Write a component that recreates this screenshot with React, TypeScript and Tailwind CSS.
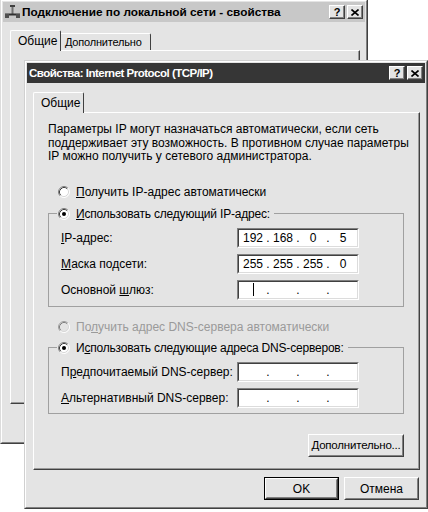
import React, { Fragment } from "react";

function Radio({ checked, disabled }: { checked?: boolean; disabled?: boolean }) {
  return (
    <svg width="12" height="12" viewBox="0 0 12 12" className="shrink-0">
      <circle cx="6" cy="6" r="5" fill={disabled ? "#e4e4e4" : "#ffffff"} />
      <path d="M2.11 9.89A5.5 5.5 0 0 1 9.89 2.11" fill="none" stroke={disabled ? "#a0a0a0" : "#808080"} />
      <path d="M9.89 2.11A5.5 5.5 0 0 1 2.11 9.89" fill="none" stroke="#ffffff" />
      <path d="M2.82 9.18A4.5 4.5 0 0 1 9.18 2.82" fill="none" stroke={disabled ? "#808080" : "#404040"} />
      <path d="M9.18 2.82A4.5 4.5 0 0 1 2.82 9.18" fill="none" stroke="#d8d8d8" />
      {checked && <circle cx="6" cy="6" r="2" fill="#000000" />}
    </svg>
  );
}

function IpBox({ vals, cursor }: { vals: string[]; cursor?: boolean }) {
  return (
    <div className="w-[122px] h-[20px] shrink-0 border border-t-[#808080] border-l-[#808080] border-r-white border-b-white">
      <div className="h-full bg-white border border-t-[#404040] border-l-[#404040] border-r-[#dcdcdc] border-b-[#dcdcdc] flex items-center pl-[1px]">
        {vals.map((v, i) => (
          <Fragment key={i}>
            <div className="w-[26px] h-full flex items-center justify-center">
              {cursor && i === 0 ? <div className="w-px h-[13px] bg-black" /> : v}
            </div>
            {i < 3 && <div className="w-[4px] flex justify-center">.</div>}
          </Fragment>
        ))}
      </div>
    </div>
  );
}

function Btn({ children, def, wide }: { children: React.ReactNode; def?: boolean; wide?: boolean }) {
  const inner = (
    <div className="h-full border border-t-white border-l-white border-r-[#404040] border-b-[#404040]">
      <div className="h-full border border-t-[#e4e4e4] border-l-[#e4e4e4] border-r-[#808080] border-b-[#808080] flex items-center justify-center whitespace-nowrap">
        {children}
      </div>
    </div>
  );
  if (def) return <div className="w-[75px] h-[23px] border border-black">{inner}</div>;
  return <div className={wide ? "w-[96px] h-[23px]" : "w-[75px] h-[23px]"}>{inner}</div>;
}

function TBtn({ children }: { children: React.ReactNode }) {
  return (
    <div className="w-[16px] h-[14px] bg-[#e4e4e4] border border-t-white border-l-white border-r-[#404040] border-b-[#404040] shadow-[inset_-1px_-1px_0_#808080] flex items-center justify-center">
      {children}
    </div>
  );
}

function TitleButtons() {
  return (
    <div className="flex items-center gap-[2px]">
      <TBtn>
        <span className="text-[11px] font-bold leading-none text-black">?</span>
      </TBtn>
      <TBtn>
        <svg width="8" height="7" viewBox="0 0 8 7">
          <path d="M0.5 0.5L7.5 6.5M7.5 0.5L0.5 6.5" stroke="#000" strokeWidth="1.6" />
        </svg>
      </TBtn>
    </div>
  );
}

function NetIcon() {
  return (
    <svg width="17" height="14" viewBox="0 0 17 14" className="shrink-0">
      <rect x="7.5" y="1" width="2" height="8" fill="#707070" />
      <rect x="1" y="8.5" width="15" height="2" fill="#303030" />
      <rect x="1" y="9" width="4" height="4" fill="#505050" />
      <rect x="12" y="9" width="4" height="4" fill="#505050" />
      <rect x="6" y="0" width="5" height="2" fill="#404040" />
    </svg>
  );
}

function Row({ label, children }: { label: React.ReactNode; children: React.ReactNode }) {
  return (
    <div className="flex items-center h-[20px]">
      <div className="flex-1 whitespace-nowrap">{label}</div>
      {children}
    </div>
  );
}

export default function App() {
  return (
    <div className="relative w-[428px] h-[512px] bg-white overflow-hidden font-['Liberation_Sans',Arial,sans-serif] text-[12px] text-black leading-[14px]">
      {/* Back window */}
      <div className="absolute left-0 top-[-1px] w-[368px] h-[445px] border border-t-[#dcdcdc] border-l-[#dcdcdc] border-r-[#404040] border-b-[#404040]">
        <div className="h-full bg-[#e4e4e4] border border-t-white border-l-white border-r-[#808080] border-b-[#808080] p-px flex flex-col">
          <div className="h-[20px] shrink-0 bg-[#c8c8c8] flex items-center pl-[1px] pr-[2px]">
            <NetIcon />
            <div className="flex-1 ml-[1px] font-bold text-[11.8px] whitespace-nowrap">Подключение по локальной сети - свойства</div>
            <TitleButtons />
          </div>
          <div className="h-[28px] shrink-0 flex items-end pl-[7px]">
            <div className="relative z-10 -mb-px w-[51px] h-[21px] bg-[#e4e4e4] border-l border-t border-r border-l-white border-t-white border-r-[#404040] rounded-t-[2px] flex items-center pl-[7px]">
              Общие
            </div>
            <div className="w-[90px] h-[17px] bg-[#e4e4e4] border-t border-r border-t-white border-r-[#404040] rounded-tr-[2px] flex items-center pl-[4px] text-[11px] tracking-[-0.2px] whitespace-nowrap">
              Дополнительно
            </div>
          </div>
          <div className="ml-[7px] mr-[5px] h-[354px] shrink-0 border border-t-white border-l-white border-r-[#404040] border-b-[#404040] shadow-[inset_-1px_-1px_0_#9a9a9a]" />
        </div>
      </div>

      {/* Front window */}
      <div className="absolute left-[24px] top-[60px] w-[404px] h-[449px] border border-t-[#d0d0d0] border-l-[#d0d0d0] border-r-[#404040] border-b-[#404040]">
        <div className="h-full bg-[#e4e4e4] border border-t-white border-l-white border-r-[#808080] border-b-[#808080] p-px flex flex-col">
          <div className="h-[20px] shrink-0 bg-[#363636] flex items-center pl-[2px] pr-[2px]">
            <div className="flex-1 font-bold text-[11.5px] tracking-[-0.5px] text-white whitespace-nowrap">Свойства: Internet Protocol (TCP/IP)</div>
            <TitleButtons />
          </div>
          <div className="h-[29px] shrink-0 flex items-end pl-[6px]">
            <div className="relative z-10 -mb-px w-[51px] h-[21px] bg-[#e4e4e4] border-l border-t border-r border-l-white border-t-white border-r-[#404040] rounded-t-[2px] flex items-center pl-[7px]">
              Общие
            </div>
          </div>
          <div className="ml-[6px] mr-[5px] h-[358px] shrink-0 border border-t-white border-l-white border-r-[#404040] border-b-[#404040] shadow-[inset_-1px_-1px_0_#9a9a9a] pl-[14px] pr-[15px] pt-[10px] flex flex-col">
            <div className="leading-[13.5px] whitespace-nowrap">
              Параметры IP могут назначаться автоматически, если сеть
              <br />
              поддерживает эту возможность. В противном случае параметры
              <br />
              IP можно получить у сетевого администратора.
            </div>

            <div className="mt-[20px] h-[16px] flex items-center gap-[6px] pl-[10px] whitespace-nowrap">
              <Radio />
              <span>
                <span className="underline">П</span>олучить IP-адрес автоматически
              </span>
            </div>

            <fieldset className="mt-[6px] border border-[#a0a0a0] pl-[12px] pr-[44px] pb-[6px] flex flex-col gap-[6px]">
              <legend className="-ml-[4px] pl-[1px] pr-[4px]">
                <div className="h-[16px] flex items-center gap-[6px] whitespace-nowrap tracking-[-0.2px]">
                  <Radio checked />
                  <span>
                    <span className="underline">И</span>спользовать следующий IP-адрес:
                  </span>
                </div>
              </legend>
              <div className="h-0" />
              <Row label={<><span className="underline">I</span>P-адрес:</>}>
                <IpBox vals={["192", "168", "0", "5"]} />
              </Row>
              <Row label={<><span className="underline">М</span>аска подсети:</>}>
                <IpBox vals={["255", "255", "255", "0"]} />
              </Row>
              <Row label={<>Основной <span className="underline">ш</span>люз:</>}>
                <IpBox vals={["", "", "", ""]} cursor />
              </Row>
            </fieldset>

            <div className="mt-[12px] h-[16px] flex items-center gap-[6px] pl-[10px] text-[#9a9a9a] whitespace-nowrap">
              <Radio disabled />
              <span>
                По<span className="underline">л</span>учить адрес DNS-сервера автоматически
              </span>
            </div>

            <fieldset className="mt-[5px] border border-[#a0a0a0] pl-[12px] pr-[44px] pb-[5px] flex flex-col gap-[6px]">
              <legend className="-ml-[4px] pl-[1px] pr-[4px]">
                <div className="h-[16px] flex items-center gap-[6px] whitespace-nowrap tracking-[-0.2px]">
                  <Radio checked />
                  <span>
                    И<span className="underline">с</span>пользовать следующие адреса DNS-серверов:
                  </span>
                </div>
              </legend>
              <div className="h-0" />
              <Row label={<>П<span className="underline">р</span>едпочитаемый DNS-сервер:</>}>
                <IpBox vals={["", "", "", ""]} />
              </Row>
              <Row label={<><span className="underline">А</span>льтернативный DNS-сервер:</>}>
                <IpBox vals={["", "", "", ""]} />
              </Row>
            </fieldset>

            <div className="mt-[20px] flex justify-end">
              <Btn wide>
                <span className="text-[11.5px] tracking-[-0.2px]">
                  <span className="underline">Д</span>ополнительно...
                </span>
              </Btn>
            </div>
          </div>
          <div className="mt-[7px] flex justify-end gap-[5px] pr-[6px]">
            <Btn def>OK</Btn>
            <Btn>Отмена</Btn>
          </div>
        </div>
      </div>
    </div>
  );
}
